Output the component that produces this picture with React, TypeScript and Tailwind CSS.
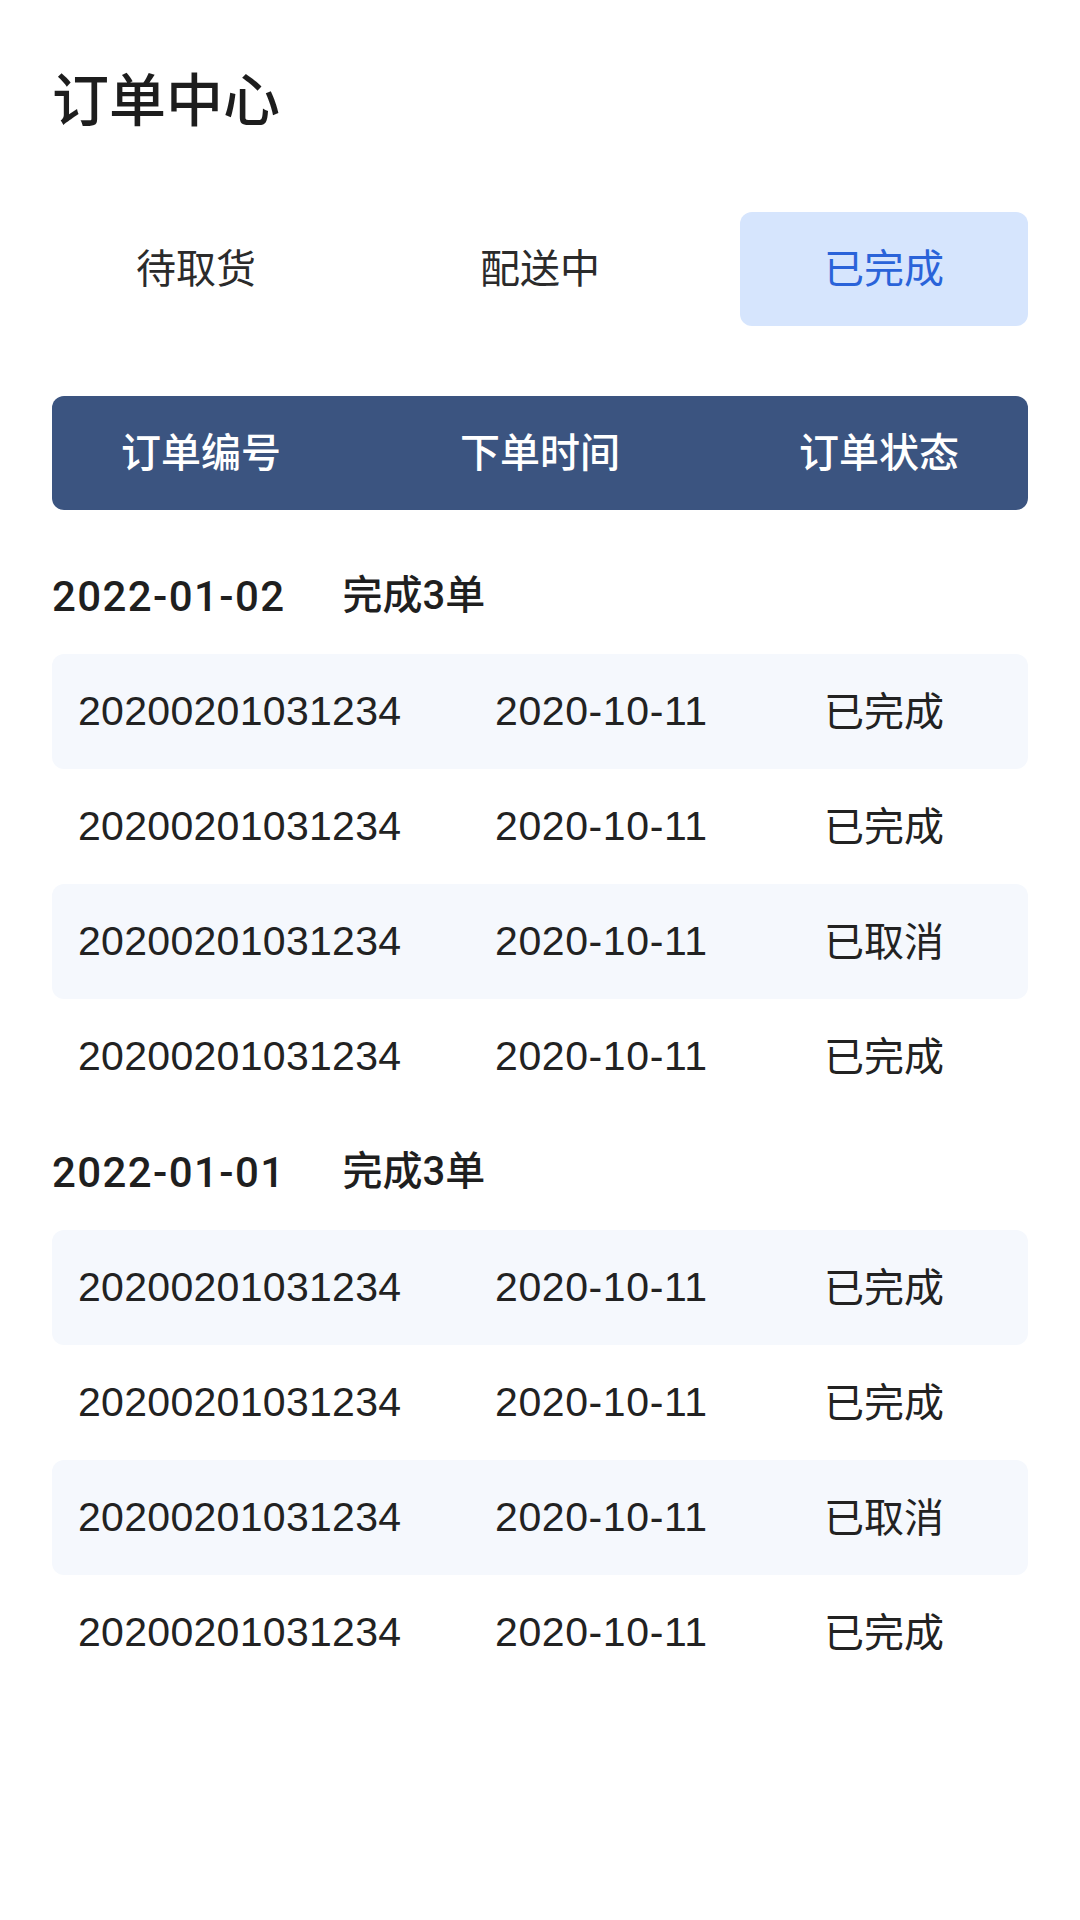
import React, { useState } from 'react';

type Order = {
  no: string;
  time: string;
  status: string;
};

type Group = {
  date: string;
  summary: string;
  orders: Order[];
};

const tabs = ['待取货', '配送中', '已完成'];

const groups: Group[] = [
  {
    date: '2022-01-02',
    summary: '完成3单',
    orders: [
      { no: '20200201031234', time: '2020-10-11', status: '已完成' },
      { no: '20200201031234', time: '2020-10-11', status: '已完成' },
      { no: '20200201031234', time: '2020-10-11', status: '已取消' },
      { no: '20200201031234', time: '2020-10-11', status: '已完成' },
    ],
  },
  {
    date: '2022-01-01',
    summary: '完成3单',
    orders: [
      { no: '20200201031234', time: '2020-10-11', status: '已完成' },
      { no: '20200201031234', time: '2020-10-11', status: '已完成' },
      { no: '20200201031234', time: '2020-10-11', status: '已取消' },
      { no: '20200201031234', time: '2020-10-11', status: '已完成' },
    ],
  },
];

const cjk = "font-['Liberation_Sans','Noto_Sans_CJK_SC',sans-serif]";

export default function App() {
  const [activeTab, setActiveTab] = useState(2);

  return (
    <div className={`min-h-[1920px] w-[1080px] bg-white px-[52px] ${cjk} text-[#222]`}>
      <h1 className="mt-[70px] h-[62px] text-[57px] font-medium leading-[62px] text-[#1d1d1d]">
        订单中心
      </h1>

      <div className="mt-[80px] flex justify-between">
        {tabs.map((tab, i) => (
          <button
            key={tab}
            onClick={() => setActiveTab(i)}
            className={`flex h-[114px] w-[288px] items-center justify-center rounded-[12px] text-[40px] ${
              activeTab === i ? 'bg-[#d6e5fd] text-[#2a63d9]' : 'text-[#2b2b2b]'
            }`}
          >
            {tab}
          </button>
        ))}
      </div>

      <div className="mt-[70px] flex h-[114px] justify-between rounded-[12px] bg-[#3b5480] text-white">
        {['订单编号', '下单时间', '订单状态'].map((h) => (
          <div key={h} className="flex w-[298px] items-center justify-center text-[40px] font-medium">
            {h}
          </div>
        ))}
      </div>

      <div className="mt-[28px]">
        {groups.map((group) => (
          <div key={group.date}>
            <div className="flex h-[116px] items-center whitespace-nowrap font-['Roboto','Noto_Sans_CJK_SC',sans-serif] font-medium text-[#1f1f1f]">
              <span className="text-[42px] tracking-[1.4px]">{group.date}</span>
              <span className="ml-[57px] text-[40px]">{group.summary}</span>
            </div>
            {group.orders.map((order, i) => (
              <div
                key={i}
                className={`flex h-[115px] items-center rounded-[12px] pl-[26px] ${
                  i % 2 === 0 ? 'bg-[#f5f8fd]' : 'bg-white'
                }`}
              >
                <div className="w-[417px] text-[41px] tracking-[0.3px]">{order.no}</div>
                <div className="flex-1 text-[41px] tracking-[0.6px]">{order.time}</div>
                <div className="w-[288px] text-center text-[40px]">{order.status}</div>
              </div>
            ))}
          </div>
        ))}
      </div>
    </div>
  );
}
